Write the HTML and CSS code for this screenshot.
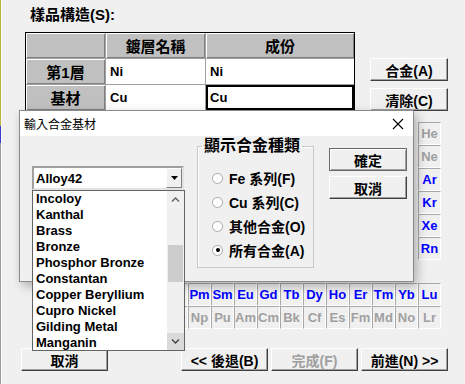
FILE: index.html
```html
<!DOCTYPE html>
<html>

<head>
  <title>樣品構造</title>
  <link rel="stylesheet" href="styles.css">
</head>

<body>
  <div class="edge">
    <div class="edge-yellow"></div>
    <div class="edge-blue"></div>
    <div class="edge-gray"></div>
  </div>

  <div class="window">
    <h1 class="heading">樣品構造(S):</h1>

    <div class="top">
      <div class="layer-table">
        <div class="cell head"></div>
        <div class="cell head">鍍層名稱</div>
        <div class="cell head">成份</div>
        <div class="cell head">第1層</div>
        <div class="cell">Ni</div>
        <div class="cell">Ni</div>
        <div class="cell head">基材</div>
        <div class="cell">Cu</div>
        <div class="cell focus">Cu</div>
      </div>
      <div class="side">
        <button class="btn">合金(A)</button>
        <button class="btn">清除(C)</button>
      </div>
    </div>

    <!-- only the cells not under the open dialog are filled in -->
    <div class="ptable">
      <div class="skip-17"></div><div class="el off">He</div>
      <div class="skip-17"></div><div class="el off">Ne</div>
      <div class="skip-17"></div><div class="el">Ar</div>
      <div class="skip-17"></div><div class="el">Kr</div>
      <div class="skip-17"></div><div class="el">Xe</div>
      <div class="skip-17"></div><div class="el">Rn</div>
      <div class="skip-18"></div>
      <div class="skip-6"></div>
      <div class="el">Nd</div><div class="el">Pm</div><div class="el">Sm</div><div class="el">Eu</div><div class="el">Gd</div><div class="el">Tb</div>
      <div class="el">Dy</div><div class="el">Ho</div><div class="el">Er</div><div class="el">Tm</div><div class="el">Yb</div><div class="el">Lu</div>
      <div class="skip-6"></div>
      <div class="el off">U</div><div class="el off">Np</div><div class="el off">Pu</div><div class="el off">Am</div><div class="el off">Cm</div><div class="el off">Bk</div>
      <div class="el off">Cf</div><div class="el off">Es</div><div class="el off">Fm</div><div class="el off">Md</div><div class="el off">No</div><div class="el off">Lr</div>
    </div>

    <div class="footer">
      <button class="btn wide cancel">取消</button>
      <button class="btn wide">&lt;&lt; 後退(B)</button>
      <button class="btn wide" disabled>完成(F)</button>
      <button class="btn wide">前進(N) &gt;&gt;</button>
    </div>
  </div>

  <div class="dialog">
    <div class="dialog-title">
      <span>輸入合金基材</span>
      <svg class="close" width="12" height="12" viewBox="0 0 12 12">
        <path d="M1 1 L11 11 M11 1 L1 11" stroke="#000" stroke-width="1.1" fill="none"/>
      </svg>
    </div>

    <div class="dialog-body">
      <div class="combo">
        <div class="combo-value">Alloy42</div>
        <div class="combo-arrow">
          <svg width="7" height="4" viewBox="0 0 7 4"><path d="M0 0 H7 L3.5 4 Z" fill="#000"/></svg>
        </div>

        <div class="drop">
          <ul class="drop-items">
            <li>Incoloy</li>
            <li>Kanthal</li>
            <li>Brass</li>
            <li>Bronze</li>
            <li>Phosphor Bronze</li>
            <li>Constantan</li>
            <li>Copper Beryllium</li>
            <li>Cupro Nickel</li>
            <li>Gilding Metal</li>
            <li>Manganin</li>
          </ul>
          <div class="scrollbar">
            <div class="scroll-btn">
              <svg width="9" height="5" viewBox="0 0 9 5"><path d="M1 4.5 L4.5 1 L8 4.5" stroke="#606060" stroke-width="1.3" fill="none"/></svg>
            </div>
            <div class="scroll-track"><div class="scroll-thumb"></div></div>
            <div class="scroll-btn down">
              <svg width="9" height="5" viewBox="0 0 9 5"><path d="M1 0.5 L4.5 4 L8 0.5" stroke="#404040" stroke-width="1.3" fill="none"/></svg>
            </div>
          </div>
        </div>
      </div>

      <fieldset class="group">
        <legend>顯示合金種類</legend>
        <div class="radio-list">
          <label class="radio-row"><span class="radio"></span>Fe 系列(F)</label>
          <label class="radio-row"><span class="radio"></span>Cu 系列(C)</label>
          <label class="radio-row"><span class="radio"></span>其他合金(O)</label>
          <label class="radio-row"><span class="radio checked"></span>所有合金(A)</label>
        </div>
      </fieldset>

      <div class="dialog-buttons">
        <button class="btn default">確定</button>
        <button class="btn">取消</button>
      </div>
    </div>
  </div>
</body>

</html>
```

FILE: styles.css
```css
html,
body {
  margin: 0;
}

body {
  width: 465px;
  height: 384px;
  overflow: hidden;
  position: relative;
  display: flex;
  background-color: #f0f0f0;
  font-family: "Liberation Sans", "Noto Sans CJK TC", sans-serif;
  font-size: 13px;
  font-weight: bold;
  color: #000;
}

/* sliver of the window behind */
.edge {
  width: 1px;
  display: flex;
  flex-direction: column;
  border-right: 1px solid #fafafa;
}

.edge-yellow {
  height: 126px;
  background-color: #b9b53a;
}

.edge-blue {
  height: 17px;
  background-color: #3b3bd0;
}

.edge-gray {
  flex: 1;
  background-color: #9c9c9c;
}

.window {
  flex: 1;
  padding: 7px 0 0 19px;
}

.heading {
  margin: 0 0 0 9px;
  font-size: 15px;
  line-height: 16px;
}

.top {
  display: flex;
  margin: 9px 0 0 4px;
}

.layer-table {
  display: grid;
  grid-template-columns: 79px 99px 148px;
  grid-auto-rows: 25px;
  gap: 1px;
  background-color: #a0a0a0;
  border: 1px solid #000;
}

.cell {
  display: flex;
  align-items: center;
  padding-left: 4px;
  background-color: #fff;
}

.cell.head {
  justify-content: center;
  padding: 0;
  background-color: #c0c0c0;
  box-shadow: inset 1px 1px #fff, inset -1px -1px #808080;
  font-size: 15px;
}

.cell.focus {
  box-shadow: inset 0 0 0 2px #000;
}

.side {
  display: flex;
  flex-direction: column;
  gap: 7px;
  margin: 26px 0 0 15px;
}

.btn {
  width: 78px;
  height: 23px;
  box-sizing: border-box;
  padding: 0;
  background-color: #f0f0f0;
  border: 1px solid;
  border-color: #fff #404040 #404040 #fff;
  box-shadow: inset -1px -1px #a0a0a0;
  font-family: inherit;
  font-size: 14px;
  font-weight: bold;
  color: #000;
}

.btn:disabled {
  color: #a0a0a0;
}

.btn.default {
  border-color: #696969;
  box-shadow: inset 1px 1px #fff, inset -1px -1px #a0a0a0;
}

/* periodic table */
.ptable {
  display: grid;
  grid-template-columns: repeat(18, 23px);
  grid-auto-rows: 23px;
  margin: 11px 0 0 6px;
}

.el {
  display: flex;
  align-items: center;
  justify-content: center;
  box-sizing: border-box;
  border: 1px solid;
  border-color: #a8a8a8 #fff #fff #a8a8a8;
  color: #0000ff;
  font-size: 13px;
}

.el.off {
  color: #a0a0a0;
}

.skip-6 {
  grid-column: span 6;
}

.skip-17 {
  grid-column: span 17;
}

.skip-18 {
  grid-column: span 18;
}

.footer {
  display: flex;
  gap: 3px;
  margin-top: 19px;
}

.btn.wide {
  width: 87px;
}

.btn.cancel {
  margin-right: 70px;
}

/* dialog */
.dialog {
  position: absolute;
  left: 19px;
  top: 110px;
  width: 395px;
  height: 172px;
  box-sizing: border-box;
  border: 1px solid #8a8a8a;
  background-color: #f0f0f0;
  box-shadow: 3px 4px 10px rgba(0, 0, 0, 0.28);
}

.dialog-title {
  height: 25px;
  display: flex;
  align-items: center;
  justify-content: space-between;
  padding: 0 9px 0 4px;
  background-color: #fff;
  font-size: 12px;
  font-weight: normal;
}

.dialog-body {
  display: flex;
  align-items: flex-start;
  padding: 1px 0 0 12px;
}

.combo {
  position: relative;
  display: flex;
  width: 152px;
  height: 24px;
  margin-top: 29px;
  box-sizing: border-box;
  border: 2px solid;
  border-color: #a0a0a0 #e3e3e3 #e3e3e3 #a0a0a0;
  background-color: #fff;
}

.combo-value {
  flex: 1;
  display: flex;
  align-items: center;
  padding-left: 2px;
}

.combo-arrow {
  width: 16px;
  display: flex;
  align-items: center;
  justify-content: center;
  box-sizing: border-box;
  border: 1px solid;
  border-color: #fff #808080 #808080 #fff;
  background-color: #f0f0f0;
}

.drop {
  position: absolute;
  left: -2px;
  top: 22px;
  width: 153px;
  height: 161px;
  box-sizing: border-box;
  display: flex;
  border: 1px solid #646464;
  background-color: #fff;
  z-index: 2;
}

.drop-items {
  flex: 1;
  margin: 0;
  padding: 0;
  list-style: none;
  overflow: hidden;
}

.drop-items li {
  height: 16px;
  line-height: 16px;
  padding-left: 3px;
  white-space: nowrap;
}

.scrollbar {
  width: 17px;
  display: flex;
  flex-direction: column;
  background-color: #f0f0f0;
}

.scroll-btn {
  height: 17px;
  display: flex;
  align-items: center;
  justify-content: center;
}

.scroll-btn.down {
  background-color: #dadada;
}

.scroll-track {
  flex: 1;
}

.scroll-thumb {
  height: 37px;
  margin: 37px 1px 0;
  background-color: #cdcdcd;
}

.group {
  width: 117px;
  height: 131px;
  box-sizing: border-box;
  margin: 0 0 0 13px;
  padding: 0 0 0 14px;
  border: 1px solid #c8c8c8;
  box-shadow: inset 1px 1px #fff;
}

.group legend {
  margin-left: -10px;
  padding: 0 2px;
  font-size: 16px;
  line-height: 18px;
}

.radio-list {
  display: flex;
  flex-direction: column;
  gap: 6px;
  margin-top: 14px;
}

.radio-row {
  display: flex;
  align-items: center;
  height: 18px;
  font-size: 14px;
  white-space: nowrap;
}

.radio {
  width: 11px;
  height: 11px;
  box-sizing: border-box;
  margin-right: 6px;
  border: 1px solid #a8a8a8;
  border-radius: 50%;
  background-color: #fff;
  display: flex;
  align-items: center;
  justify-content: center;
}

.radio.checked::after {
  content: "";
  width: 4px;
  height: 4px;
  border-radius: 50%;
  background-color: #000;
}

.dialog-buttons {
  display: flex;
  flex-direction: column;
  gap: 5px;
  margin: 11px 0 0 15px;
}
```
